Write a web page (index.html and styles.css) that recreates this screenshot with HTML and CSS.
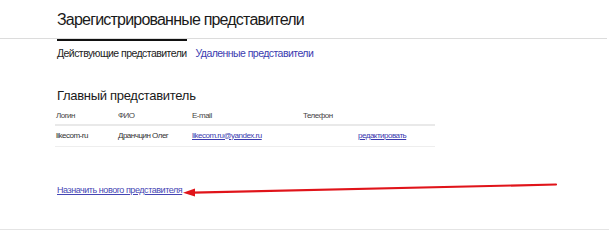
FILE: index.html
```html
<!DOCTYPE html>
<html lang="ru">
<head>
<meta charset="utf-8">
<title>Зарегистрированные представители</title>
<link rel="stylesheet" href="styles.css">
</head>
<body>
<div class="page">
  <div class="header">
    <h1 class="title">Зарегистрированные представители</h1>
  </div>
  <div class="tabs">
    <span class="tab tab-active">Действующие представители</span>
    <a class="tab tab-link" href="#">Удаленные представители</a>
  </div>
  <div class="section">
    <h2 class="section-title">Главный представитель</h2>
    <div class="table">
      <div class="row row-head">
        <span class="c1">Логин</span>
        <span class="c2">ФИО</span>
        <span class="c3">E-mail</span>
        <span class="c4">Телефон</span>
        <span class="c5"></span>
      </div>
      <div class="row row-data">
        <span class="c1">likecom-ru</span>
        <span class="c2">Дранчцин Олег</span>
        <a class="c3 link-small" href="#">likecom.ru@yandex.ru</a>
        <span class="c4"></span>
        <a class="c5 link-small" href="#">редактировать</a>
      </div>
    </div>
    <div class="assign">
      <a class="assign-link" href="#">Назначить нового представителя</a>
      <svg class="arrow" width="376" height="16" viewBox="0 0 376 16">
        <line x1="10" y1="10.6" x2="373" y2="2.5" stroke="#e0141a" stroke-width="2.2" stroke-linecap="round"/>
        <polygon points="0,10.8 12,6.6 12,14.6" fill="#e0141a"/>
      </svg>
    </div>
  </div>
  <div class="footer-line"></div>
</div>
</body>
</html>
```
FILE: styles.css
```css
html, body {
  margin: 0;
  padding: 0;
  background: #fff;
}
body {
  font-family: "Liberation Sans", Arial, sans-serif;
  color: #222;
}
.page {
  width: 609px;
}
.header {
  height: 39px;
  box-sizing: border-box;
  border-bottom: 1px solid #dcdcdc;
  margin-right: 2px;
  padding-left: 57px;
  padding-top: 10px;
}
.title {
  margin: 0;
  font-size: 16px;
  font-weight: normal;
  line-height: 20px;
  color: #1a1a1a;
  letter-spacing: -0.8px;
}
.tabs {
  display: flex;
  gap: 9px;
  padding-left: 57px;
  font-size: 10.5px;
  letter-spacing: -0.55px;
}
.tab {
  padding-top: 6px;
  border-top: 2px solid transparent;
  line-height: 12px;
}
.tab-active {
  border-top-color: #111;
  color: #222;
}
.tab-link {
  color: #3b3bb0;
  text-decoration: none;
}
.section {
  padding-left: 57px;
  padding-top: 29px;
}
.section-title {
  margin: 0;
  font-size: 13px;
  font-weight: normal;
  line-height: 16px;
  color: #1a1a1a;
  letter-spacing: -0.3px;
}
.table {
  width: 380px;
  margin-left: -2px;
  margin-top: 2px;
  font-size: 8px;
  letter-spacing: -0.5px;
}
.row {
  display: grid;
  grid-template-columns: 62px 74px 111px 55px 75px;
  padding-left: 1px;
  align-items: center;
  box-sizing: border-box;
}
.row-head {
  height: 20px;
  border-bottom: 2px solid #e9e9e9;
  color: #444;
}
.row-data {
  height: 21px;
  padding-bottom: 2px;
  border-bottom: 1px solid #eeeeee;
  color: #333;
}
.link-small {
  color: #3b3bb0;
  text-decoration: underline;
}
.assign {
  display: flex;
  align-items: center;
  margin-top: 35px;
  height: 16px;
}
.assign-link {
  font-size: 9px;
  letter-spacing: -0.45px;
  color: #4646b4;
  text-decoration: underline;
}
.arrow {
  display: block;
  margin-left: 1px;
}
.footer-line {
  margin-top: 31px;
  border-top: 1px solid #e4e4e4;
}
```
